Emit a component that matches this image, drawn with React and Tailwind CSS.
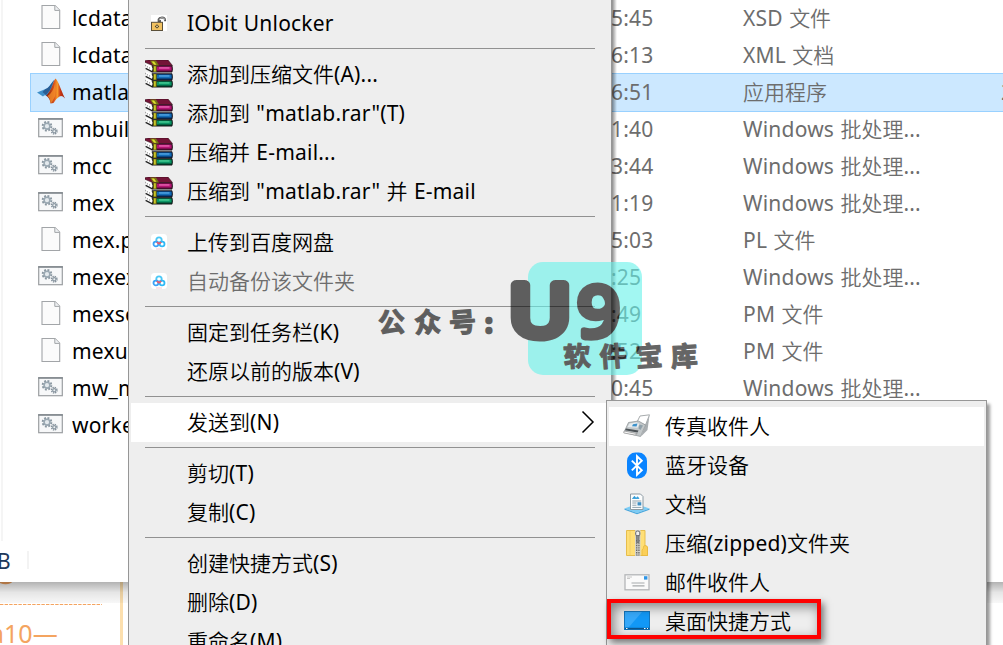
import React from "react";

// Chinese runs use a lighter weight than the Latin runs beside them.
function Label({ children }) {
  const runs = children.match(/[\u4e00-\u9fff]+|[^\u4e00-\u9fff]+/g) || [];
  return (
    <span className="whitespace-pre">
      {runs.map((run, i) =>
        /[\u4e00-\u9fff]/.test(run) ? (
          <span key={i} className="font-['Noto_Sans_CJK_SC',sans-serif] font-[350]">{run}</span>
        ) : (
          <span key={i} className="font-['Noto_Sans',sans-serif] tracking-[0.2px] [word-spacing:0.7px]">{run}</span>
        )
      )}
    </span>
  );
}

function FileIcon() {
  return (
    <svg width="20" height="26" viewBox="0 0 20 26">
      <path d="M1 1.5H14L18.7 6.2V24.5H1Z" fill="#fbfbfb" stroke="#a2a5a8" strokeWidth="1.1" />
      <path d="M13.8 1.5V6.4H18.7" fill="#eef0f2" stroke="#a2a5a8" strokeWidth="1" />
    </svg>
  );
}

function BatchIcon() {
  return (
    <svg className="-translate-x-px" width="25" height="20" viewBox="0 0 25 20">
      <rect x="0.7" y="0.7" width="23.6" height="18" fill="#f7f8f9" stroke="#9b9ea1" strokeWidth="1.2" />
      <path d="M0.2 1H24.8" stroke="#7f868c" strokeWidth="1.5" />
      <circle cx="9" cy="8.2" r="4.3" fill="none" stroke="#8996a0" strokeWidth="2" strokeDasharray="1.9 1.47" />
      <circle cx="9" cy="8.2" r="2.9" fill="#e3e9ed" stroke="#9aa8b2" strokeWidth="1.6" />
      <circle cx="16.3" cy="13.2" r="2.7" fill="none" stroke="#84919b" strokeWidth="1.5" strokeDasharray="1.3 .82" />
      <circle cx="16.3" cy="13.2" r="1.6" fill="#eef2f4" stroke="#8c99a3" strokeWidth="1.2" />
    </svg>
  );
}

function MatlabIcon() {
  return (
    <svg width="28" height="26" viewBox="0 0 28 26">
      <defs>
        <linearGradient id="flame" x1="0" x2="1">
          <stop offset="0" stopColor="#7c1c10" />
          <stop offset="0.42" stopColor="#d7501c" />
          <stop offset="0.6" stopColor="#f79a2c" />
          <stop offset="0.75" stopColor="#c93a16" />
          <stop offset="1" stopColor="#9c2110" />
        </linearGradient>
      </defs>
      <path d="M0 14.5L8.5 11Q11 10.5 14 6Q16 3 17.5 1.5L15 10L9.5 18Q8 16.5 6 18.5Z" fill="#3f8fc9" />
      <path d="M8.5 11Q11 10.5 14 6L17 2L13 12L9 17L5.5 14Z" fill="#2a5d94" />
      <path d="M18.5 0.5C21 2 23.5 11 28 20.5Q25 17 22.5 18.5Q19 20.5 16.5 25L13.5 25.5Q13 20 9 17.5Q13 14 15.5 7Q17 2 18.5 0.5Z" fill="url(#flame)" />
      <path d="M18.2 5Q19.5 11 18.2 18L14.8 24.5L13.5 25Q13.2 20 10.5 18Q16 15 18.2 5Z" fill="#f6912b" opacity=".75" />
    </svg>
  );
}

function LockIcon() {
  return (
    <svg width="16" height="16" viewBox="0 0 16 16">
      <rect width="16" height="16" fill="#fff" />
      <path d="M9 7.5V6H7.6V4.4Q8.2 2.7 11 2.5Q14 2.6 14.1 5V6.2" fill="none" stroke="#555" strokeWidth="1.9" />
      <path d="M8.2 5.4V4.8Q8.8 2.8 11 2.7Q13.8 2.8 13.9 5" fill="none" stroke="#ddd" strokeWidth=".7" />
      <rect x="0.5" y="7.3" width="11" height="8.2" fill="#f1c160" stroke="#5a4f39" />
      <path d="M6 9.2L8.2 11.4L6 13.6L3.8 11.4Z" fill="#3b3424" />
      <rect x="5.2" y="10.6" width="1.6" height="1.6" fill="#f9e0a0" />
    </svg>
  );
}

function RarBook({ y, base, light, dark }) {
  return (
    <g transform={`translate(0 ${y})`}>
      <path d="M0.5 0L7.5 3V9L0.5 5.5Z" fill="#fff" />
      <path d="M.6 5L7.4 8.5" stroke="#222" strokeWidth="1.3" />
      <path d="M.6 1.5V3M2.4 2.8V4.2M4.6 3.8V5.4" stroke="#888" strokeWidth=".8" />
      <path d="M7 2.4H27Q28 5.5 27 8.8H7Q9 5.5 7 2.4Z" fill={dark} stroke="#120d10" strokeWidth=".8" />
      <rect x="8.5" y="3.4" width="18" height="3.7" fill={base} />
      <rect x="14" y="4" width="10.5" height="1.3" fill={light} />
      <path d="M8 2.6H11.8V8.7H8Z" fill="#5d5a10" />
      <path d="M9 3H10.8V8.2H9Z" fill="#c9c629" />
    </g>
  );
}

function RarIcon() {
  return (
    <svg width="28" height="28" viewBox="0 0 28 28">
      <RarBook y={18.3} base="#0b9565" light="#4fd29b" dark="#04432e" />
      <RarBook y={11.3} base="#126cb7" light="#58a9e5" dark="#082f60" />
      <RarBook y={3.3} base="#b31573" light="#ee69b7" dark="#5f0c3b" />
      <path d="M0 .8L3 0H23L27.5 5.5H7.5L0 2.3Z" fill="#741437" stroke="#260912" strokeWidth=".5" />
      <path d="M5 .6H11L14 5.4H8Z" fill="#777315" />
      <path d="M6.5 1.4H9L11.5 4.8H9.3Z" fill="#e0df31" />
    </svg>
  );
}

function CloudIcon() {
  return (
    <svg width="16" height="16" viewBox="0 0 16 16">
      <rect width="16" height="16" rx="3.5" fill="#fff" />
      <circle cx="8" cy="6" r="2.7" fill="none" stroke="#4bc8f6" strokeWidth="1.8" />
      <circle cx="4.9" cy="10" r="2.4" fill="none" stroke="#3ba2f7" strokeWidth="1.8" />
      <circle cx="11.1" cy="10" r="2.4" fill="none" stroke="#2fb9f6" strokeWidth="1.8" />
      <path d="M5.8 8.1L8 9.7L10.2 8.1" fill="none" stroke="#f0596b" strokeWidth="1.7" />
      <path d="M5 15H11" stroke="#f9bfc8" strokeWidth=".8" />
    </svg>
  );
}

function FaxIcon() {
  return (
    <svg width="28" height="24" viewBox="0 0 28 24">
      <path d="M14 8L17 2L26.5 .8L22.5 11Z" fill="#fff" stroke="#a7abad" strokeWidth="1" />
      <path d="M22.5 11L26.5 1.5L24.5 16L18 22.5Z" fill="#a9aeb1" />
      <path d="M5.5 8.5L15.5 7L22.5 11L17.5 22.5L1 18.5L2.5 15Z" fill="#c3c8ca" stroke="#8b9194" strokeWidth=".7" />
      <path d="M6.5 9.5L13.8 8.3L16.5 10L14.5 13.8L4.5 13Z" fill="#e6ebee" />
      <path d="M10 10.3L14.5 9.5L13.5 12.4L9 12.2Z" fill="#3b91cb" />
      <path d="M16.5 10.5L20 11.5L17.5 16L15.5 14.5Z" fill="#8fa0aa" />
      <path d="M3 14.4L15.5 16.4L14.5 18.4L2 16.3Z" fill="#4c5256" />
      <path d="M1 17L14.3 19.7L12 21L.8 19Z" fill="#f8f8f8" stroke="#777" strokeWidth=".5" />
    </svg>
  );
}

function BluetoothIcon() {
  return (
    <svg width="20" height="27" viewBox="0 0 20 27">
      <rect x="0" y="0.5" width="20" height="26" rx="8.5" fill="#0a84ff" />
      <path d="M4.8 8.6L14.8 18.2L10 22.8V4.2L14.8 8.8L4.8 18.4" fill="none" stroke="#fff" strokeWidth="1.9" />
    </svg>
  );
}

function DocsIcon() {
  return (
    <svg width="26" height="22" viewBox="0 0 26 22">
      <path d="M.5 15.5L12.5 11L25.5 15.5L13 20Z" fill="#7cccf5" />
      <path d="M.5 15.5L13 20L25.5 15.5V16.8L13 21.3L.5 16.8Z" fill="#48a7dd" />
      <path d="M6.5 1H16.5L19 3.5V16.5H6.5Z" fill="#fcfdfd" stroke="#8c9aa3" />
      <path d="M8.5 5.5L10.5 3.2L12 5.5L13.5 3.7L15 5.5Z" fill="#2f9bd8" stroke="#2f9bd8" strokeWidth=".8" />
      <path d="M8.3 8H17.3M8.3 10H12.5M8.3 12.2H12.5M8.3 14.4H17.3" stroke="#8fa1ad" strokeWidth="1" />
      <rect x="13.5" y="9.2" width="3.8" height="3.3" fill="#3e8fc4" />
    </svg>
  );
}

function ZipIcon() {
  return (
    <svg width="22" height="26" viewBox="0 0 22 26">
      <path d="M.5 .5H19V15.5L21.5 17V25.5H.5Z" fill="#ffdf76" stroke="#e6bd4c" />
      <path d="M17.5 17Q17.5 15.5 19 15.5Q21.5 15.5 21.5 17.5V25.5H16V20Q17.5 19 17.5 17Z" fill="#fbcf58" stroke="#e5b63c" strokeWidth=".7" />
      <path d="M4 1V25" stroke="#efcb62" strokeWidth=".8" />
      <rect x="9" y="0" width="5.5" height="26" fill="#d4d3cc" />
      <path d="M11.8 10V25.5" stroke="#6b6b66" strokeWidth="3.6" strokeDasharray="1.4 1" />
      <path d="M11.8 10V25.5" stroke="#c7c6c0" strokeWidth="1" />
      <rect x="9.7" y="1" width="4.1" height="5" rx="1.8" fill="#eee" stroke="#66696b" />
      <path d="M10.4 5.5H13.2L12.9 12.5H10.7Z" fill="#878b8e" stroke="#5d6063" strokeWidth=".6" />
    </svg>
  );
}

function MailIcon() {
  return (
    <svg width="26" height="17" viewBox="0 0 26 17">
      <rect x="1" y=".8" width="24" height="15" fill="#fafafa" stroke="#b4b6b8" strokeWidth="1.3" />
      <path d="M3 3H8M3 4.5H6" stroke="#bbb" strokeWidth=".8" />
      <rect x="20" y="2.2" width="3.4" height="3.4" fill="#2d95e6" />
      <path d="M7.5 9H20.5M8.5 11.8H20.5" stroke="#a6a9ab" strokeWidth="1.2" />
    </svg>
  );
}

function DesktopIcon() {
  return (
    <svg width="26" height="20" viewBox="0 0 26 20">
      <rect x=".5" y=".5" width="25" height="18" fill="#1298f6" stroke="#1476bd" />
      <path d="M1 1H18L5 16H1Z" fill="#36a9fa" />
      <path d="M1 17.5H25" stroke="#0d568e" strokeWidth="1.4" />
      <path d="M2 17.5H3.5M20 17.5H21.5M23 17.5H24" stroke="#fff" strokeWidth="1" />
    </svg>
  );
}

const files = [
  [FileIcon, "lcdata", "5:45", "XSD 文件"],
  [FileIcon, "lcdata", "6:13", "XML 文档"],
  [MatlabIcon, "matlab", "6:51", "应用程序"],
  [BatchIcon, "mbuild", "1:40", "Windows 批处理..."],
  [BatchIcon, "mcc", "3:44", "Windows 批处理..."],
  [BatchIcon, "mex", "1:19", "Windows 批处理..."],
  [FileIcon, "mex.pl", "5:03", "PL 文件"],
  [BatchIcon, "mexext", ":25", "Windows 批处理..."],
  [FileIcon, "mexset", ":49", "PM 文件"],
  [FileIcon, "mexuti", ":52", "PM 文件"],
  [BatchIcon, "mw_m", "0:45", "Windows 批处理..."],
  [BatchIcon, "worker", "", ""],
];

const menu = [
  [[LockIcon, "IObit Unlocker"]],
  [
    [RarIcon, "添加到压缩文件(A)..."],
    [RarIcon, '添加到 "matlab.rar"(T)'],
    [RarIcon, "压缩并 E-mail..."],
    [RarIcon, '压缩到 "matlab.rar" 并 E-mail'],
  ],
  [
    [CloudIcon, "上传到百度网盘"],
    [CloudIcon, "自动备份该文件夹", "disabled"],
  ],
  [
    [null, "固定到任务栏(K)"],
    [null, "还原以前的版本(V)"],
  ],
  [[null, "发送到(N)", "open"]],
  [
    [null, "剪切(T)"],
    [null, "复制(C)"],
  ],
  [
    [null, "创建快捷方式(S)"],
    [null, "删除(D)"],
    [null, "重命名(M)"],
  ],
];

const targets = [
  [FaxIcon, "传真收件人"],
  [BluetoothIcon, "蓝牙设备"],
  [DocsIcon, "文档"],
  [ZipIcon, "压缩(zipped)文件夹"],
  [MailIcon, "邮件收件人"],
  [DesktopIcon, "桌面快捷方式"],
];

function Explorer() {
  return (
    <section className="relative h-[582px] shrink-0 bg-white">
      <div className="flex h-[541px] pl-px">
        <div className="w-[2px] shrink-0 bg-[#f5f5f5]" />
        <div className="-mt-px ml-[27px] flex-1">
          {files.map(([Icon, name, time, type], i) => (
            <div
              key={i}
              className={
                i === 2
                  ? "relative -mb-[2px] flex h-[39px] items-center overflow-hidden border border-r-0 border-[#99d1ff] bg-[#cce8ff] pb-[2px]"
                  : "flex h-[37px] items-center pl-px"
              }
            >
              <div className="flex w-[41px] shrink-0 items-center justify-center pb-[2px] pr-[1px]">
                <Icon />
              </div>
              <div className="w-[539px] shrink-0 text-black"><Label>{name}</Label></div>
              <div className="w-[132px] shrink-0 text-[#6d6d6d]"><Label>{time}</Label></div>
              <div className="w-[258px] shrink-0 text-[#6d6d6d]"><Label>{type}</Label></div>
              {i === 2 && <div className="shrink-0 text-[#6d6d6d]"><Label>2</Label></div>}
            </div>
          ))}
        </div>
      </div>
      <div className="flex h-[41px] items-center pb-[2px] text-[#1e395b]">
        <div className="-ml-[3px] w-[30px]"><Label>B</Label></div>
        <div className="mb-[1px] h-[18px] w-[2px] bg-[#f3f3f3]" />
      </div>
    </section>
  );
}

function PageBehind() {
  return (
    <section className="relative flex h-[63px] shrink-0 bg-white text-[#f4a460]">
      <div className="w-[120px] overflow-hidden">
        <svg className="block" width="102" height="23" viewBox="0 0 102 23">
          <ellipse cx="5.5" cy="-1.2" rx="7" ry="3.4" fill="#f4a460" />
          <path d="M0 22.5H102" stroke="#f4a460" strokeWidth="1" strokeDasharray="3.4 1.2" />
        </svg>
        <div className="-ml-[10px] mt-[11px] whitespace-pre font-['Noto_Sans',sans-serif] text-[25px] leading-[34px]">a10—</div>
      </div>
      <div className="w-[3px] bg-[#fcdfae]" />
      <div className="absolute left-0 top-0 h-[21px] w-full bg-linear-to-b from-black/30 via-black/10 to-black/3" />
    </section>
  );
}

function ContextMenu() {
  return (
    <nav className="absolute left-[128px] top-0 h-[645px] w-[484px] overflow-hidden border-x border-[#969696] bg-[#eeeeee] pt-1 text-black">
      {menu.map((group, g) => (
        <div key={g}>
          {g > 0 && (
            <div className="h-3 pl-4 pr-4 pt-[5px]">
              <div className="h-px bg-[#919191]" />
            </div>
          )}
          {group.map(([Icon, label, state]) => (
            <div
              key={label}
              className={
                "mx-[2px] flex h-[39px] items-center " +
                (state === "open" ? "bg-white" : state === "disabled" ? "text-[#6d6d6d]" : "")
              }
            >
              <div className="flex w-[56px] shrink-0 justify-center pb-px">{Icon && <Icon />}</div>
              <div className="flex-1 pb-[2px]"><Label>{label}</Label></div>
              {state === "open" && (
                <svg className="mb-[2px] mr-[14px]" width="14" height="24" viewBox="0 0 14 24">
                  <path d="M1.5 1.5L12 12L1.5 22.5" fill="none" stroke="#000" strokeWidth="1.5" />
                </svg>
              )}
            </div>
          ))}
        </div>
      ))}
    </nav>
  );
}

function SendToMenu() {
  return (
    <nav className="absolute left-[606px] top-[400px] h-[260px] w-[381px] border border-[#979797] bg-[#eeeeee] px-[2px] pt-[6px] text-black shadow-[3px_4px_3px_rgba(0,0,0,0.4)]">
      {targets.map(([Icon, label], i) => (
        <div key={label} className={"flex h-[39px] items-center " + (i === 0 ? "bg-white" : "")}>
          <div className="flex w-14 shrink-0 justify-center pb-px"><Icon /></div>
          <div className="pb-[2px]"><Label>{label}</Label></div>
        </div>
      ))}
    </nav>
  );
}

function Watermark() {
  return (
    <div className="absolute left-[370px] top-[262px] h-[114px] w-[340px] opacity-60">
      <div className="absolute left-[158px] top-0 h-[113px] w-[114px] rounded-[15px] bg-[#66f3eb]" />
      <svg className="absolute left-0 top-0" width="340" height="114" viewBox="0 0 340 114">
        <g stroke="#000" strokeLinejoin="round" strokeLinecap="round" className="font-['Noto_Sans',sans-serif]">
          <text x="139" y="73.5" fontSize="71" fontWeight="400" strokeWidth="10" textLength="62" lengthAdjust="spacingAndGlyphs">U</text>
          <text x="207" y="75" fontSize="70" fontWeight="500" strokeWidth="6.5" textLength="43" lengthAdjust="spacingAndGlyphs">9</text>
        </g>
        <g stroke="#000" strokeWidth="1.2" strokeLinejoin="round" fontSize="27" fontWeight="700" textAnchor="middle" className="font-['Noto_Sans_CJK_SC',sans-serif]">
          <text transform="rotate(-4 22 60)" x="21.5" y="70">公</text>
          <text transform="rotate(-4 58 60)" x="57.5" y="70">众</text>
          <text transform="rotate(-4 93 60)" x="92.5" y="70">号</text>
          <text x="119" y="71" strokeWidth="2.4">:</text>
          <text transform="rotate(-4 207 94)" x="207" y="104">软</text>
          <text transform="rotate(-4 243 94)" x="243" y="104">件</text>
          <text transform="rotate(-4 279 94)" x="279" y="104">宝</text>
          <text transform="rotate(-4 314 94)" x="314" y="104">库</text>
        </g>
      </svg>
    </div>
  );
}

export default function App() {
  return (
    <main className="relative flex h-[645px] w-[1003px] flex-col overflow-hidden bg-white text-[21px] leading-[36px]">
      <Explorer />
      <PageBehind />
      <div className="absolute left-[612px] top-0 h-[400px] w-[5px] bg-linear-to-r from-black/45 to-transparent" />
      <ContextMenu />
      <SendToMenu />
      <Watermark />
      <div className="absolute left-[607px] top-[599px] h-[40px] w-[214px] border-4 border-[#fe0000] shadow-[3px_4px_7px_rgba(0,0,0,0.5),inset_3px_4px_12px_rgba(0,0,0,0.45)]" />
    </main>
  );
}
